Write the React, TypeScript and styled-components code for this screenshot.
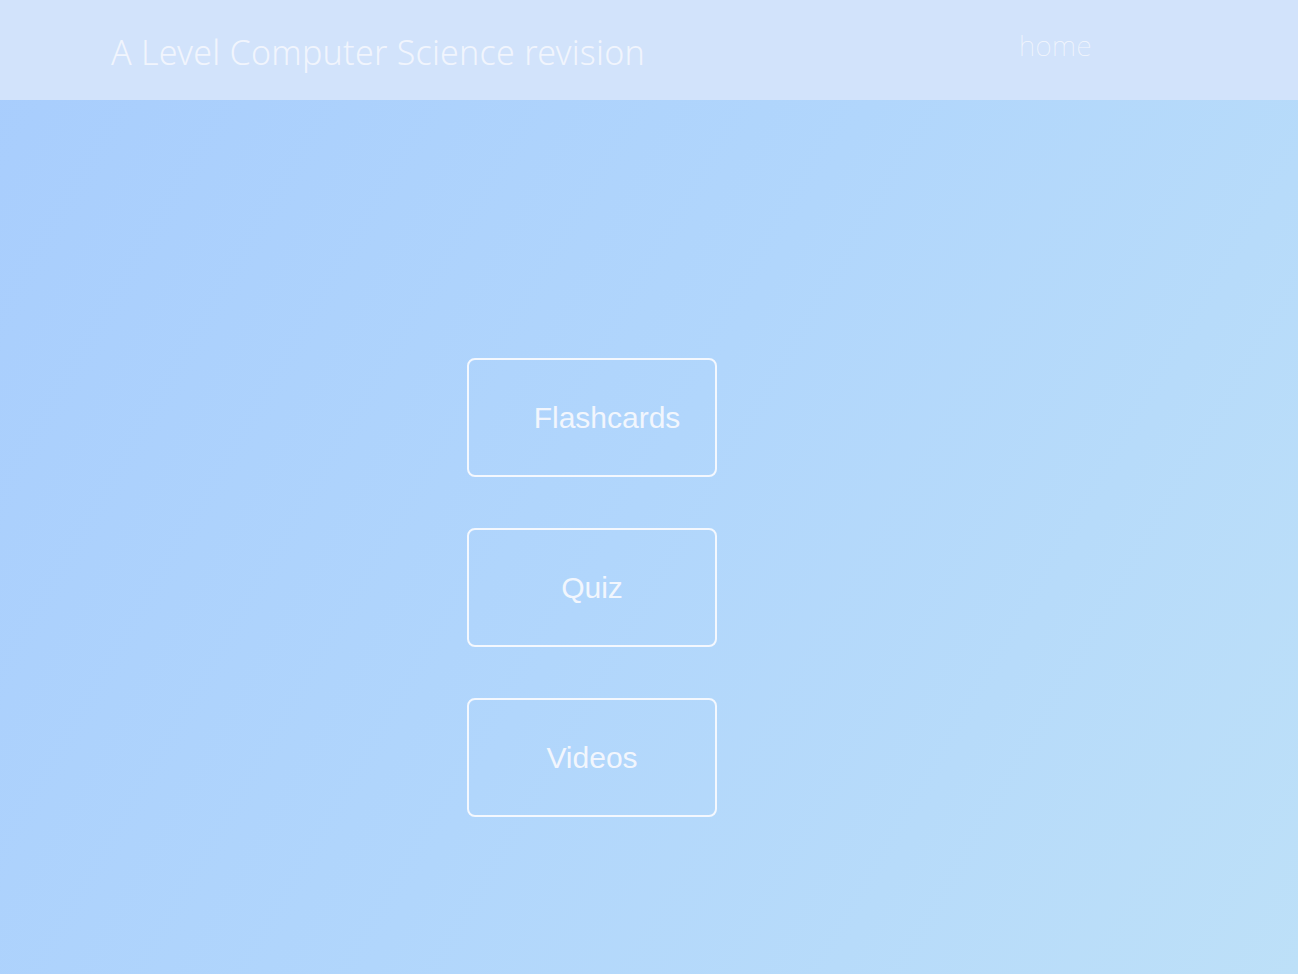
import React from "react";
import styled, { createGlobalStyle } from "styled-components";

const GlobalStyle = createGlobalStyle`
  html, body {
    margin: 0;
    padding: 0;
    min-height: 100%;
  }
  body {
    background: linear-gradient(120deg, #a8cdfd 0%, #b1d6fc 50%, #bde0f8 100%);
    min-height: 974px;
  }
`;

const Page = styled.div`
  min-height: 974px;
  display: flex;
  flex-direction: column;
`;

const Header = styled.header`
  height: 100px;
  background: #d2e3fb;
  display: flex;
  align-items: flex-start;
  justify-content: space-between;
  padding: 0 206px 0 111px;
`;

const Title = styled.h1`
  margin: 29px 0 0;
  font-family: "Noto Sans", "DejaVu Sans", sans-serif;
  font-weight: 300;
  font-size: 34px;
  letter-spacing: 0.25px;
  color: #f1f5fd;
`;

const NavLink = styled.a`
  margin-top: 26px;
  font-family: "Noto Sans", "DejaVu Sans", sans-serif;
  font-weight: 100;
  font-size: 28px;
  letter-spacing: 0.5px;
  color: #f4f7fd;
  text-decoration: none;
`;

const Menu = styled.main`
  display: flex;
  flex-direction: column;
  gap: 51px;
  padding: 258px 0 0 467px;
`;

const MenuButton = styled.a<{ $shift?: number }>`
  box-sizing: border-box;
  width: 250px;
  height: 119px;
  border: 2px solid #f4f8fe;
  border-radius: 8px;
  display: flex;
  align-items: center;
  justify-content: center;
  padding-left: ${(p) => (p.$shift ? `${p.$shift}px` : "0")};
  font-family: "Liberation Sans", Arial, sans-serif;
  font-size: 30px;
  color: #f2f6fd;
  text-decoration: none;
`;

export default function App() {
  return (
    <Page>
      <GlobalStyle />
      <Header>
        <Title>A Level Computer Science revision</Title>
        <NavLink href="#">home</NavLink>
      </Header>
      <Menu>
        <MenuButton href="#" $shift={30}>Flashcards</MenuButton>
        <MenuButton href="#">Quiz</MenuButton>
        <MenuButton href="#">Videos</MenuButton>
      </Menu>
    </Page>
  );
}
